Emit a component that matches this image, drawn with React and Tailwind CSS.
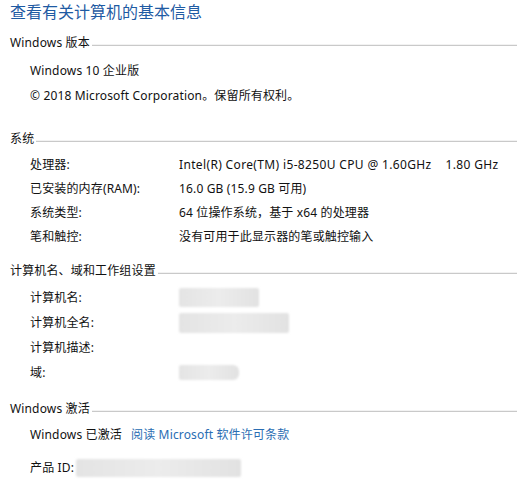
import React from "react";

const font = { fontFamily: '"Segoe UI", "Noto Sans", "Noto Sans CJK SC", sans-serif' };

function Header({ children, className = "" }) {
  return (
    <div className={"flex items-center h-[20px] pl-[10px] " + className}>
      <span className="whitespace-nowrap">{children}</span>
      <div className="flex-1 ml-[2px] mt-[3px] flex flex-col">
        <div className="h-px bg-[#f2f2f2]" />
        <div className="h-px bg-[#c9c9c9]" />
      </div>
    </div>
  );
}

function Row({ label, children, h = "h-[24px]" }) {
  return (
    <div className={"flex items-center pl-[30px] " + h}>
      <span className="w-[149px] shrink-0 whitespace-nowrap">{label}</span>
      <div className="flex items-center whitespace-nowrap">{children}</div>
    </div>
  );
}

function Blur({ w, h, className = "" }) {
  return (
    <div
      className={"rounded-[2px] blur-[1px] bg-gradient-to-r from-[#e4e4e4] via-[#ececec] to-[#e2e2e2] " + className}
      style={{ width: w, height: h }}
    />
  );
}

export default function App() {
  return (
    <div className="w-[517px] h-[497px] bg-white text-[12px] tracking-[0.15px] text-[#111] overflow-hidden" style={font}>
      <div className="h-[24px] leading-[24px] pl-[10px] text-[16px] tracking-normal text-[#1f5ba3]">
        查看有关计算机的基本信息
      </div>

      <Header className="mt-[9px]">Windows 版本</Header>
      <div className="mt-[5px] flex items-center h-[25px] pl-[30px]">Windows 10 企业版</div>
      <div className="flex items-center h-[25px] pl-[30px]">© 2018 Microsoft Corporation。保留所有权利。</div>

      <Header className="mt-[21px]">系统</Header>
      <div className="mt-[4px]">
        <Row label="处理器:">
          <span className="tracking-[0.35px]">Intel(R) Core(TM) i5-8250U CPU @ 1.60GHz</span>
          <span className="ml-[14px] tracking-[0.35px]">1.80 GHz</span>
        </Row>
        <Row label="已安装的内存(RAM):">16.0 GB (15.9 GB 可用)</Row>
        <Row label="系统类型:">64 位操作系统，基于 x64 的处理器</Row>
        <Row label="笔和触控:">没有可用于此显示器的笔或触控输入</Row>
      </div>

      <Header className="mt-[12px]">计算机名、域和工作组设置</Header>
      <div className="mt-[4px]">
        <Row label="计算机名:" h="h-[25px]">
          <Blur w={80} h={19} />
        </Row>
        <Row label="计算机全名:" h="h-[25px]">
          <Blur w={110} h={20} />
        </Row>
        <Row label="计算机描述:" h="h-[25px]" />
        <Row label="域:" h="h-[25px]">
          <Blur w={60} h={15} className="rounded-r-[6px]" />
        </Row>
      </div>

      <Header className="mt-[14px]">Windows 激活</Header>
      <div className="mt-[4px] flex items-center h-[24px] pl-[30px] whitespace-nowrap">
        Windows 已激活
        <span className="ml-[9px] text-[#2a6db3]">阅读 Microsoft 软件许可条款</span>
      </div>
      <div className="mt-[9px] flex items-center h-[24px] pl-[30px] whitespace-nowrap">
        产品 ID:
        <Blur w={165} h={18} className="ml-[2px]" />
      </div>
    </div>
  );
}
